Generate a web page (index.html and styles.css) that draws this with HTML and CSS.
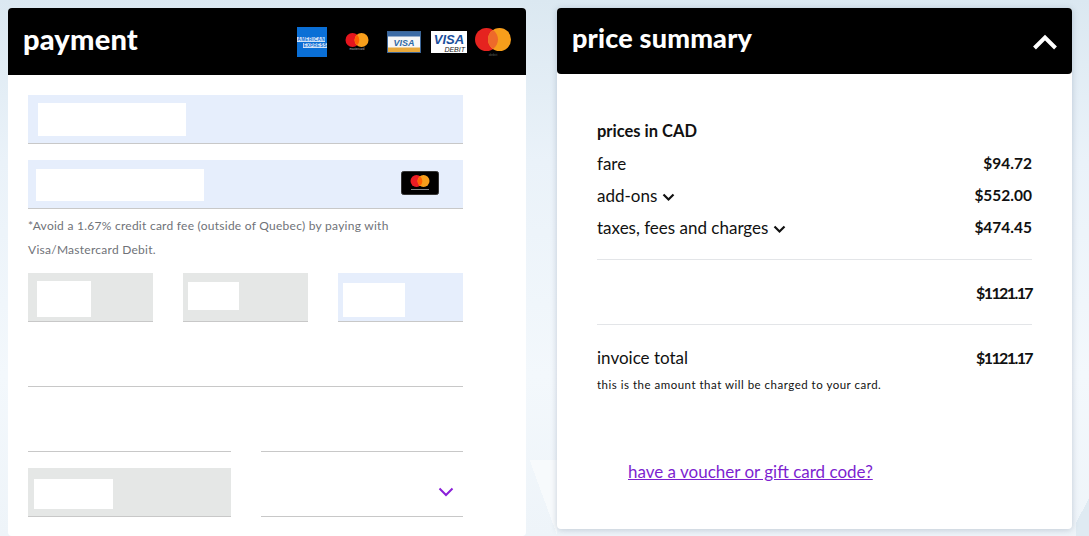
FILE: index.html
```html
<!DOCTYPE html>
<html lang="en">
<head>
  <meta charset="UTF-8" />
  <title>Payment</title>
  <link rel="stylesheet" href="styles.css">
</head>
<body>
  <section class="card payment">
    <header class="card-head payment-head">
      <h2>payment</h2>
      <div class="logos">
        <svg class="logo-amex" width="30" height="30" viewBox="0 0 30 30">
          <rect width="30" height="30" fill="#0a6fd6"/>
          <rect y="10" width="28" height="5" fill="#cfe2f7"/>
          <rect x="6" y="16" width="24" height="5" fill="#cfe2f7"/>
          <text x="0.5" y="14.2" font-size="4.6" font-weight="700" fill="#0a6fd6" font-family="Liberation Sans" textLength="27">AMERICAN</text>
          <text x="6.5" y="20.2" font-size="4.6" font-weight="700" fill="#0a6fd6" font-family="Liberation Sans" textLength="23">EXPRESS</text>
        </svg>
        <svg class="logo-mc" width="24" height="18" viewBox="0 0 24 18">
          <circle cx="7.5" cy="7" r="7" fill="#e5151d"/>
          <circle cx="16.5" cy="7" r="7" fill="#f79e1b"/>
          <path d="M12 1.8a7 7 0 0 1 0 10.4a7 7 0 0 1 0-10.4z" fill="#ff5f00"/>
          <text x="12" y="17" font-size="3" fill="#bbb" text-anchor="middle" font-family="Liberation Sans">mastercard</text>
        </svg>
        <svg class="logo-visa" width="34" height="22" viewBox="0 0 34 22">
          <rect x="0.5" y="0.5" width="33" height="21" fill="#f7f7f7" stroke="#3c6596"/>
          <rect x="1" y="1" width="32" height="4.5" fill="#3c6ba5"/>
          <rect x="1" y="16.5" width="32" height="4.5" fill="#e8a93c"/>
          <text x="17" y="14.5" font-size="9" font-weight="700" font-style="italic" fill="#2f6aa6" text-anchor="middle" font-family="Liberation Sans">VISA</text>
        </svg>
        <svg class="logo-debit" width="36" height="22" viewBox="0 0 36 22">
          <rect width="36" height="22" fill="#fff"/>
          <text x="18" y="12.5" font-size="13" font-weight="700" font-style="italic" fill="#1a4f9c" text-anchor="middle" font-family="Liberation Sans">VISA</text>
          <text x="34" y="20.5" font-size="7" font-style="italic" fill="#222" text-anchor="end" font-family="Liberation Sans">DEBIT</text>
        </svg>
        <svg class="logo-mcd" width="36" height="30" viewBox="0 0 36 30">
          <circle cx="11.500" cy="11.500" r="11.500" fill="#e5231f"/>
          <circle cx="24.500" cy="11.500" r="11.500" fill="#f79e1b"/>
          <path d="M18 2a11.500 11.500 0 0 1 0 19a11.500 11.500 0 0 1 0-19z" fill="#ee6a2a"/>
          <text x="18" y="28" font-size="4" fill="#555" text-anchor="middle" font-family="Liberation Sans">debit</text>
        </svg>
      </div>
    </header>

    <div class="form">
      <div class="field blue f-name"><span class="mask m-name"></span></div>
      <div class="field blue f-number">
        <span class="mask m-number"></span>
        <svg class="card-icon" width="38" height="24" viewBox="0 0 38 24">
          <rect x="0.5" y="0.5" width="37" height="23" rx="2" fill="#000" stroke="#333"/>
          <circle cx="15.500" cy="10" r="6" fill="#eb1c24"/>
          <circle cx="22.500" cy="10" r="6" fill="#f79e1b"/>
          <path d="M19 5.200a6 6 0 0 1 0 9.600a6 6 0 0 1 0-9.600z" fill="#ff5f00"/>
          <rect x="10" y="18" width="18" height="1" fill="#888"/>
        </svg>
      </div>
      <p class="note">*Avoid a 1.67% credit card fee (outside of Quebec) by paying with<br>Visa/Mastercard Debit.</p>
      <div class="row-3">
        <div class="field grey"><span class="mask m-a"></span></div>
        <div class="field grey"><span class="mask m-b"></span></div>
        <div class="field blue"><span class="mask m-c"></span></div>
      </div>
      <div class="field plain f-addr"></div>
      <div class="row-2 row-city">
        <div class="field plain"></div>
        <div class="field plain"></div>
      </div>
      <div class="row-2">
        <div class="field grey"><span class="mask m-d"></span></div>
        <div class="field plain f-select">
          <svg width="16" height="10" viewBox="0 0 16 10"><path d="M1.500 1.500L8 8l6.500-6.500" fill="none" stroke="#8a1fd8" stroke-width="2"/></svg>
        </div>
      </div>
    </div>
  </section>

  <section class="card summary">
    <header class="card-head summary-head">
      <h2>price summary</h2>
      <svg class="toggle" width="26" height="16" viewBox="0 0 26 16"><path d="M2.500 14L13 3.500 23.500 14" fill="none" stroke="#fff" stroke-width="4"/></svg>
    </header>
    <div class="summary-body">
      <div class="line"><strong>prices in CAD</strong></div>
      <div class="line"><span>fare</span><strong>$94.72</strong></div>
      <div class="line">
        <span>add-ons <svg class="caret" width="13" height="9" viewBox="0 0 13 9"><path d="M1.500 1.500l5 5 5-5" fill="none" stroke="#111" stroke-width="2.200"/></svg></span>
        <strong>$552.00</strong>
      </div>
      <div class="line">
        <span>taxes, fees and charges <svg class="caret" width="13" height="9" viewBox="0 0 13 9"><path d="M1.500 1.500l5 5 5-5" fill="none" stroke="#111" stroke-width="2.200"/></svg></span>
        <strong>$474.45</strong>
      </div>
      <div class="line subtotal"><strong class="amount">$1121.17</strong></div>
      <div class="line total"><span>invoice total</span><strong class="amount">$1121.17</strong></div>
      <p class="charged">this is the amount that will be charged to your card.</p>
      <a class="voucher" href="#">have a voucher or gift card code?</a>
    </div>
  </section>
</body>
</html>
```

FILE: styles.css
```css
* {
  box-sizing: border-box;
}

body {
  margin: 0;
  height: 536px;
  overflow: hidden;
  display: flex;
  align-items: flex-start;
  gap: 31px;
  padding: 8px 0 0 8px;
  font-family: 'Lato', sans-serif;
  color: #111;
  /* faint snowy peaks behind the cards */
  background:
    linear-gradient(70deg, rgba(247, 250, 252, 0) 50%, #f7fafc 50%) 530px 460px / 27px 76px no-repeat,
    linear-gradient(-62deg, #dfeaf2 50%, rgba(223, 234, 242, 0) 50%) 1076px 485px / 13px 51px no-repeat,
    linear-gradient(180deg, #dbe8f1 0%, #eaf2f9 30%, #f3f8fc 70%, #eef4f9 100%);
}

.card {
  background: #fff;
  border-radius: 4px;
}

.payment {
  width: 518px;
  height: 528px;
  flex-shrink: 0;
}

.summary {
  width: 515px;
  height: 521px;
  flex-shrink: 0;
  box-shadow: 0 1px 6px rgba(60, 80, 110, 0.25);
}

.card-head {
  display: flex;
  align-items: center;
  justify-content: space-between;
  background: #000;
  color: #fff;
  border-radius: 4px 4px 0 0;
}

.card-head h2 {
  margin: 0;
  font-weight: 900;
}

.payment-head {
  height: 67px;
  padding: 0 15px;
}

.payment-head h2 {
  margin-top: -6px;
  font-size: 29px;
  letter-spacing: 0.2px;
}

.summary-head {
  height: 66px;
  padding: 0 15px;
  border-radius: 4px;
}

.summary-head h2 {
  margin-top: -8px;
  font-size: 27px;
  letter-spacing: 0.2px;
}

.toggle {
  margin: 2px -1px 0 0;
}

.logos {
  display: flex;
  align-items: flex-start;
  margin-top: 1px;
}

.logo-amex { margin: 0 18px 0 0; }
.logo-mc { margin: 6px 18px 0 0; }
.logo-visa { margin: 4px 10px 0 0; }
.logo-debit { margin: 4px 8px 0 0; }
.logo-mcd { margin: 1px 0 0 0; }

.form {
  width: 435px;
  margin: 20px 0 0 20px;
}

.field {
  display: flex;
  align-items: center;
  height: 49px;
  border-bottom: 1px solid #c8c8c8;
}

.blue {
  background: #e6eefc;
}

.grey {
  background: #e5e7e6;
}

.mask {
  display: block;
  background: #fff;
}

.m-name { width: 148px; height: 33px; margin: 1px 0 0 10px; }
.m-number { width: 168px; height: 32px; margin: 2px 0 0 8px; }
.m-a { width: 54px; height: 36px; margin: 4px 0 0 9px; }
.m-b { width: 51px; height: 28px; margin: -3px 0 0 5px; }
.m-c { width: 62px; height: 34px; margin: 5px 0 0 5px; }
.m-d { width: 79px; height: 30px; margin: 4px 0 0 6px; }

.f-number {
  justify-content: space-between;
  margin-top: 16px;
  padding-right: 24px;
}

.card-icon {
  margin-top: -2px;
}

.note {
  margin: 5px 0 11px;
  font-size: 12px;
  line-height: 24px;
  letter-spacing: 0.26px;
  color: #6f7278;
}

.row-3 {
  display: grid;
  grid-template-columns: repeat(3, 125px);
  gap: 30px;
}

.f-addr {
  margin-top: 16px;
}

.row-2 {
  display: grid;
  grid-template-columns: 203px 202px;
  gap: 30px;
  margin-top: 16px;
}

.f-select {
  justify-content: flex-end;
  padding-right: 9px;
}

.summary-body {
  padding: 41px 40px 0;
}

.line {
  display: flex;
  align-items: center;
  justify-content: space-between;
  height: 32px;
  font-size: 17px;
}

.line strong {
  font-size: 15.5px;
  font-weight: 700;
}

.line:first-child strong {
  font-size: 16.5px;
}

.line .amount {
  font-size: 16px;
  letter-spacing: -1.6px;
}

.caret {
  margin-left: 0;
}

.subtotal {
  justify-content: flex-end;
  height: 66px;
  margin-top: 16px;
  border-top: 1px solid #e3e5e8;
  border-bottom: 1px solid #e3e5e8;
}

.total {
  margin-top: 16px;
}

.charged {
  margin: 2px 0 0;
  font-size: 11.5px;
  line-height: 20px;
  letter-spacing: 0.5px;
}

.voucher {
  display: block;
  margin: 66px 0 0 31px;
  font-size: 17px;
  color: #7d1fd0;
}
```
